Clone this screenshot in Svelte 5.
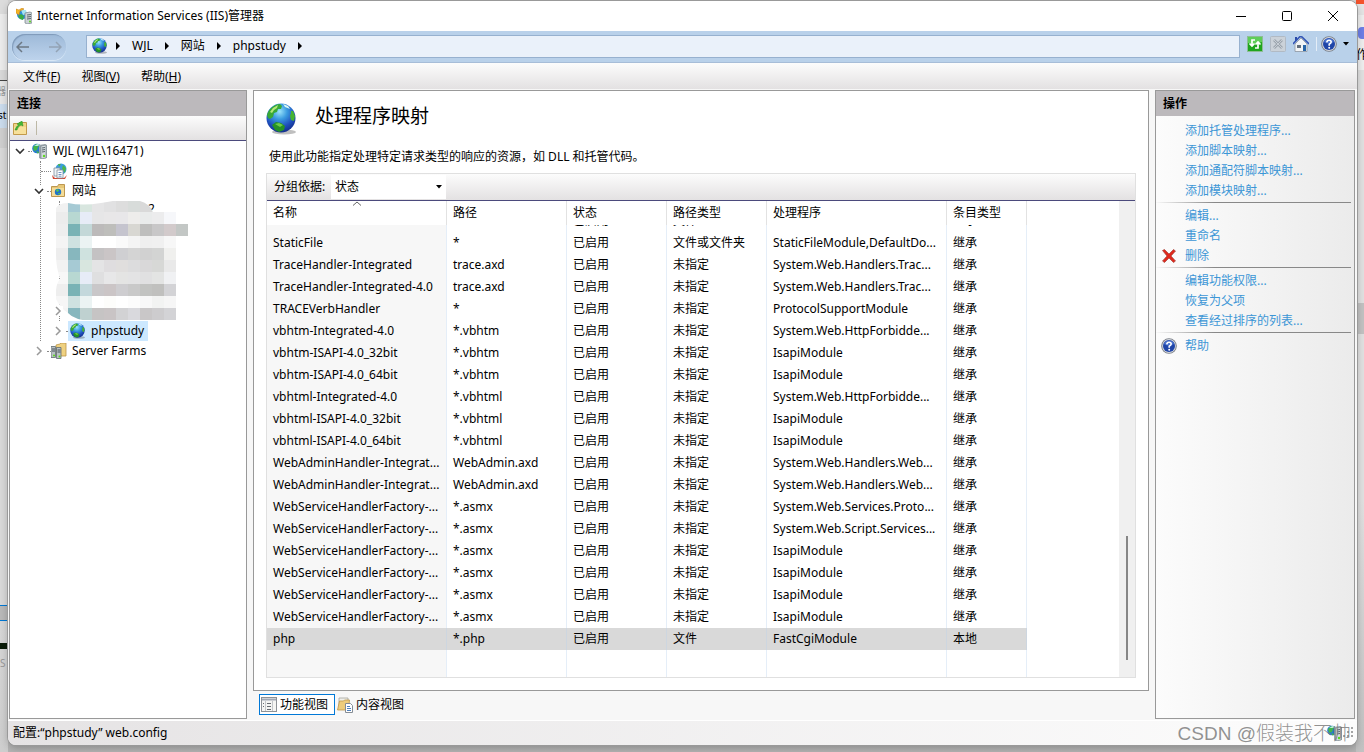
<script>
	import { onMount } from 'svelte';

	let groupBy = '状态';
	let selected = 19;
	let view = 'features';
	let list;

	const columns = [
		{ label: '名称', width: 180 },
		{ label: '路径', width: 120 },
		{ label: '状态', width: 100 },
		{ label: '路径类型', width: 100 },
		{ label: '处理程序', width: 180 },
		{ label: '条目类型', width: 80 }
	];

	const on = '已启用';
	const any = '未指定';
	const up = '继承';

	const rows = [
		['SSINC-stm', '*.stm', on, '文件', 'ServerSideIncludeModule', up],
		['StaticFile', '*', on, '文件或文件夹', 'StaticFileModule,DefaultDo...', up],
		['TraceHandler-Integrated', 'trace.axd', on, any, 'System.Web.Handlers.Trac...', up],
		['TraceHandler-Integrated-4.0', 'trace.axd', on, any, 'System.Web.Handlers.Trac...', up],
		['TRACEVerbHandler', '*', on, any, 'ProtocolSupportModule', up],
		['vbhtm-Integrated-4.0', '*.vbhtm', on, any, 'System.Web.HttpForbidde...', up],
		['vbhtm-ISAPI-4.0_32bit', '*.vbhtm', on, any, 'IsapiModule', up],
		['vbhtm-ISAPI-4.0_64bit', '*.vbhtm', on, any, 'IsapiModule', up],
		['vbhtml-Integrated-4.0', '*.vbhtml', on, any, 'System.Web.HttpForbidde...', up],
		['vbhtml-ISAPI-4.0_32bit', '*.vbhtml', on, any, 'IsapiModule', up],
		['vbhtml-ISAPI-4.0_64bit', '*.vbhtml', on, any, 'IsapiModule', up],
		['WebAdminHandler-Integrat...', 'WebAdmin.axd', on, any, 'System.Web.Handlers.Web...', up],
		['WebAdminHandler-Integrat...', 'WebAdmin.axd', on, any, 'System.Web.Handlers.Web...', up],
		['WebServiceHandlerFactory-...', '*.asmx', on, any, 'System.Web.Services.Proto...', up],
		['WebServiceHandlerFactory-...', '*.asmx', on, any, 'System.Web.Script.Services...', up],
		['WebServiceHandlerFactory-...', '*.asmx', on, any, 'IsapiModule', up],
		['WebServiceHandlerFactory-...', '*.asmx', on, any, 'IsapiModule', up],
		['WebServiceHandlerFactory-...', '*.asmx', on, any, 'IsapiModule', up],
		['WebServiceHandlerFactory-...', '*.asmx', on, any, 'IsapiModule', up],
		['php', '*.php', on, '文件', 'FastCgiModule', '本地']
	];

	const actions = [
		['添加托管处理程序...', '添加脚本映射...', '添加通配符脚本映射...', '添加模块映射...'],
		['编辑...', '重命名', '删除'],
		['编辑功能权限...', '恢复为父项', '查看经过排序的列表...'],
		['帮助']
	];

	// blurred-out site names, one row of 12px tiles per entry
	const mosaic = [
		['#f1f1f1', '#a6cad4', '#d8e6df', '#e5e5e6', '#e1e1e2', '#dddddd', '#d8dcda', '#d9d9d9', '#e1e1e1'],
		['#ececec', '#b8d8d2', '#e7ecf7', '#e6e6e7', '#e8e7e8', '#e8e7e9', '#eeedeb', '#e9ebeb', '#ececed', '#f6f7fa'],
		['#eeeeee', '#79b3b5', '#c3d8d8', '#bcbaba', '#bebebb', '#c5c4ce', '#d8d7d2', '#bebebd', '#c8c7c8', '#d2cacb', '#c3c7c5'],
		['#f4f4f4', '#cfe2e1', '#ebf3f3', '#ffffff', '#ffffff', '#fafafa', '#f4f4f4', '#efefef', '#f0f0f0', '#f7f7f7'],
		['#ededed', '#87b7be', '#cfe2df', '#c4c2c3', '#cac5c6', '#cfcfd2', '#d4d4d4', '#d1d1d1', '#d3d4d3', '#f0f0ee'],
		['#f2f2f2', '#a6cad4', '#d8e6df', '#e4e4e5', '#dfdddf', '#e0dedd', '#dcdcdd', '#d9d8d9', '#d7d8d6', '#e9e9e9'],
		['#f7f7f7', '#b8d8d2', '#e7ecf7', '#dfdfe0', '#e7e7e8', '#e4e4e3', '#e3e3e4', '#e0e0e1', '#e3e4e3', '#f0f1f3'],
		['#eeeeee', '#79b3b5', '#c3d8dc', '#c9c7c9', '#cbc5c6', '#cecdd0', '#c9c9c9', '#c2c3c1', '#c0c0be', '#d3d3d6'],
		['#f6f6f6', '#cfe2e1', '#ebf3f3', '#ffffff', '#fdfdfb', '#ffffff', '#fcfcfc', '#f8f8f8', '#f2f3f2', '#f6f6f6'],
		['#f4f4f4', '#87b7be', '#bfd1d0', '#c6c4c4', '#c9c4c5', '#d2d2d4', '#d9d9dd', '#c9c7c8', '#cdccce', '#d3d3d6']
	];

	function scrollToEnd() {
		list.scrollTop = list.scrollHeight;
	}

	onMount(() => {
		scrollToEnd();
		window.addEventListener('resize', scrollToEnd);
		return () => window.removeEventListener('resize', scrollToEnd);
	});
</script>

{#snippet globe(size)}
	<svg width={size} height={size} viewBox="0 0 32 32" aria-hidden="true">
		<defs>
			<radialGradient id="sea" cx="0.45" cy="0.28" r="0.75">
				<stop offset="0" stop-color="#9be4fa" />
				<stop offset="0.35" stop-color="#3a9be0" />
				<stop offset="0.7" stop-color="#1f4fbd" />
				<stop offset="1" stop-color="#122a86" />
			</radialGradient>
		</defs>
		<ellipse cx="18" cy="29" rx="12" ry="2.5" fill="#000" opacity="0.25" />
		<circle cx="15" cy="15" r="14.5" fill="url(#sea)" />
		<path d="M1 12C3 5 9 1 14 1l2 2-1 3-3 0-1 3-3 1-1 4-3 2-2-1z" fill="#39a935" />
		<path d="M4 9l3-4 5-3-1 3-3 2-2 3z" fill="#b6e878" />
		<path d="M6 22l4-3 5 1 4 3-1 4-5 2-4-2z" fill="#259127" />
		<path d="M9 21l4-1 4 2-3 2z" fill="#6ccb48" />
		<path d="M25 8l2 0 2 5-1 5-3-1-1-4 1-3z" fill="#46b332" />
		<path d="M17 1l5 2 2 3-5-2z" fill="#d9f7f4" />
	</svg>
{/snippet}

{#snippet server()}
	<svg width="16" height="16" viewBox="0 0 16 16" aria-hidden="true">
		<circle cx="5" cy="5.5" r="4.8" fill="#2679d2" />
		<path d="M1 4l3-3 4 1-2 2-1 3-3 1zM4 8l3 1-1 2z" fill="#43b649" />
		<path d="M2 2.5l4-1.5 2 1-3 1z" fill="#c8f1f4" />
		<path d="M7 2l6-1 2 1v13l-6 1-2-1z" fill="#9aa5ab" />
		<path d="M9 3l5-1v13l-5 1z" fill="#d5dcdf" stroke="#77828a" stroke-width="0.6" />
		<path d="M10 5l3-.5M10 7l3-.5M10 9l3-.5" stroke="#59656d" />
		<circle cx="12" cy="13" r="1.2" fill="#5dda1e" />
	</svg>
{/snippet}

{#snippet help()}
	<svg width="16" height="16" viewBox="0 0 16 16" aria-hidden="true">
		<circle cx="8" cy="8" r="7.8" fill="#777c85" />
		<circle cx="8" cy="8" r="6.9" fill="#d5d8de" />
		<circle cx="8" cy="8" r="6" fill="#1f45a8" />
		<path d="M3 6a5.3 5.3 0 0 1 10 0q-5 3-10 0z" fill="#4a72ce" />
		<path d="M5.8 6.3Q6 4.2 8.100 4.200t2.100 1.900Q10.200 7.300 8.200 8.300v1.400" fill="none" stroke="#fff" stroke-width="1.600" />
		<circle cx="8.2" cy="11.7" r="1" fill="#fff" />
	</svg>
{/snippet}

{#snippet chevron(open)}
	<svg class="chevron" width="10" height="10" viewBox="0 0 10 10" aria-hidden="true">
		{#if open}
			<path d="M1 3l4 4 4-4" fill="none" stroke="#333" stroke-width="1.6" />
		{:else}
			<path d="M3 1l4 4-4 4" fill="none" stroke="#999" stroke-width="1.5" />
		{/if}
	</svg>
{/snippet}

{#snippet crumbArrow()}
	<svg width="4" height="8" viewBox="0 0 4 8" aria-hidden="true"><path d="M0 0l4 4-4 4z" fill="#000" /></svg>
{/snippet}

<div class="desktop">
	<div class="behind-left" aria-hidden="true">
		<span class="scrap gray">器</span>
		<span class="scrap stu">stu</span>
		<span class="scrap tab"></span>
		<span class="scrap bar"></span>
		<span class="scrap ess">S</span>
	</div>
	<div class="behind-right" aria-hidden="true">
		<span class="scrap blob"></span>
		<span class="scrap zuo">作</span>
		<span class="scrap thumb"></span>
	</div>

	<div class="window">
		<header class="titlebar">
			<svg width="16" height="16" viewBox="0 0 16 16" aria-hidden="true">
				<circle cx="6" cy="6.5" r="5" fill="#2b8ddd" />
				<path d="M2 8l3-2 3 2-1 4-3-1z" fill="#3aac42" />
				<path d="M5 2l5 0 1 4-4 1z" fill="#a5e4f2" />
				<path d="M0 5V1l3 1 3-2 2 1-4 2-1 4z" fill="#f5b526" stroke="#c87a0a" stroke-width="0.5" />
				<path d="M9 5l5-1 2 1v10l-5 1-2-1z" fill="#cbd2d5" stroke="#748088" stroke-width="0.7" />
				<path d="M11 7l4-.5M11 9l4-.5M11 11l4-.5" stroke="#5b666d" />
				<circle cx="14" cy="13.5" r="1" fill="#55d31e" />
			</svg>
			<h1>Internet Information Services (IIS)管理器</h1>
			<div class="window-buttons">
				<button aria-label="最小化"><svg width="10" height="10"><path d="M0 5.5h10" stroke="#000" /></svg></button>
				<button aria-label="最大化">
					<svg width="10" height="10"><rect x="0.5" y="0.5" width="9" height="9" rx="1" fill="none" stroke="#000" /></svg>
				</button>
				<button aria-label="关闭"><svg width="10" height="10"><path d="M0 0l10 10M10 0L0 10" stroke="#000" /></svg></button>
			</div>
		</header>

		<div class="navbar">
			<div class="history">
				<button aria-label="后退">
					<svg width="14" height="12" viewBox="0 0 14 12"><path d="M13 6H1M6 1L1 6l5 5" fill="none" stroke="#6c7884" stroke-width="1.5" /></svg>
				</button>
				<button aria-label="前进">
					<svg width="14" height="12" viewBox="0 0 14 12"><path d="M1 6h12M8 1l5 5-5 5" fill="none" stroke="#93a3b5" stroke-width="1.5" /></svg>
				</button>
			</div>
			<nav class="address" aria-label="路径">
				{@render globe(16)}
				{@render crumbArrow()}
				<button>WJL</button>
				{@render crumbArrow()}
				<button>网站</button>
				{@render crumbArrow()}
				<button>phpstudy</button>
				{@render crumbArrow()}
			</nav>
			<div class="tools">
				<button aria-label="刷新">
					<svg width="16" height="16" viewBox="0 0 16 16">
						<rect x="0.5" y="0.5" width="15" height="15" fill="#1fa51e" stroke="#8ebd95" />
						<path d="M1 1h14v5q-7 3-14 1z" fill="#5fce58" />
						<path d="M8 4H5v5M2.500 7.500L5 10l2.500-2.500M8 12h3V7M8.500 8.500L11 6l2.500 2.500" fill="none" stroke="#fff" stroke-width="1.7" />
					</svg>
				</button>
				<button aria-label="停止" disabled>
					<svg width="16" height="16" viewBox="0 0 16 16">
						<rect x="0.5" y="0.5" width="15" height="15" rx="1" fill="#cbd2d9" stroke="#b1bac4" />
						<path d="M4 4l8 8M12 4l-8 8" stroke="#9ca5ae" stroke-width="2.6" />
						<path d="M4 4l8 8M12 4l-8 8" stroke="#c7ced5" />
					</svg>
				</button>
				<button aria-label="主页">
					<svg width="16" height="16" viewBox="0 0 16 16">
						<path d="M2 1h2v4H2z" fill="#2a4aa8" />
						<path d="M2 8l6-6 6 6v7.500H2z" fill="#f2f4f6" stroke="#8b95a1" stroke-width="0.8" />
						<path d="M0 8l7-7.500L9 1l7 7" fill="none" stroke="#3455b4" stroke-width="1.6" />
						<rect x="4" y="9" width="4" height="3" fill="#636e7b" />
						<rect x="10" y="9" width="3" height="6" fill="#2765a8" />
					</svg>
				</button>
				<span class="divider"></span>
				<button class="help-button" aria-label="帮助">
					{@render help()}
					<svg width="6" height="4" viewBox="0 0 6 4"><path d="M0 0h6L3 3.500z" /></svg>
				</button>
			</div>
		</div>

		<nav class="menubar" aria-label="菜单">
			<button>文件(<u>F</u>)</button>
			<button>视图(<u>V</u>)</button>
			<button>帮助(<u>H</u>)</button>
		</nav>

		<main>
			<section class="pane connections">
				<h2>连接</h2>
				<div class="pane-tools">
					<button aria-label="连接到">
						<svg width="14" height="14" viewBox="0 0 14 14">
							<path d="M0.5 2.500h5l1-1h7v12H0.500z" fill="#efd487" stroke="#c29a4b" />
							<path d="M1 6h12v7H1z" fill="#f7e09b" />
							<path d="M2 9q1-4 4-5L4 3l5-3 1 5-2-1q-3 1-4 5z" fill="#45b936" stroke="#258c20" stroke-width="0.5" />
						</svg>
					</button>
					<span class="grip"></span>
				</div>
				<ul class="tree">
					<li class="depth-0">
						{@render chevron(true)}<i class="dots"></i>
						{@render server()}
						<button>WJL (WJL\16471)</button>
					</li>
					<li class="depth-1 leaf">
						<i class="dots"></i>
						<svg width="16" height="16" viewBox="0 0 16 16" aria-hidden="true">
							<circle cx="10" cy="6" r="5.5" fill="#3b9de0" />
							<path d="M12 2l3 3-1 5-3-4zM7 1l3 0-2 3z" fill="#4db64a" />
							<path d="M1 12l3 3h9l3-3-2 4H2z" fill="#cf4634" />
							<path d="M3 5h6v8H3z" fill="#eef3f7" stroke="#7d8d9c" stroke-width="0.8" />
							<path d="M6 7h6v8H6z" fill="#fff" stroke="#7d8d9c" stroke-width="0.8" />
							<path d="M7.500 9.500h3M7.500 11.500h3M7.500 13.200h3" stroke="#4e79b5" stroke-width="0.8" />
						</svg>
						<button>应用程序池</button>
					</li>
					<li class="depth-1">
						{@render chevron(true)}<i class="dots"></i>
						<svg width="16" height="16" viewBox="0 0 16 16" aria-hidden="true">
							<path d="M0.5 3.500h6l1-2h6v12h-13z" fill="#e7c777" stroke="#bd9750" />
							<path d="M1 5h12v8H1z" fill="#f4dc97" />
							<circle cx="7" cy="9" r="3.200" fill="#1f72c8" />
							<path d="M5 7l2-1 1 2-2 1zM7 10l2 0-1 2z" fill="#56c949" />
						</svg>
						<button>网站</button>
					</li>
					<li class="masked">
						<svg width="132" height="120" viewBox="0 1 132 120" aria-hidden="true">
							<defs>
								<clipPath id="smear">
									<path d="M0 8Q3 3 12 3 26 6 45 3 70-2 84 1q10 3 13 11h35v109H36q-18-1-24-8-8-5-12-14-1-15 4-20-4-12-4-24z" />
								</clipPath>
							</defs>
							<text x="92" y="13" class="leftover">2</text>
							<g clip-path="url(#smear)">
								{#each mosaic as line, y}
									{#each line as fill, x}
										<rect x={x * 12} y={y * 12} width="12" height="12" {fill} />
									{/each}
								{/each}
							</g>
						</svg>
						<span class="masked-chevron">{@render chevron(false)}</span>
					</li>
					<li class="depth-2">
						{@render chevron(false)}<i class="dots"></i>
						<button class="active">{@render globe(16)}phpstudy</button>
					</li>
					<li class="depth-1">
						{@render chevron(false)}<i class="dots"></i>
						<svg width="16" height="16" viewBox="0 0 16 16" aria-hidden="true">
							<path d="M5 2l4-1 1-1h5v13H6z" fill="#efd180" stroke="#bd9547" stroke-width="0.8" />
							<path d="M0 3.500h4.500v11H0zM5.500 4.500H10v11H5.500z" fill="#b9c1c4" stroke="#606b70" stroke-width="0.8" />
							<path d="M1 6h3M1 8h3M6.500 7h3M6.500 9h3" stroke="#465158" />
							<circle cx="3" cy="12.500" r="1" fill="#58d818" /><circle cx="8.500" cy="13.500" r="1" fill="#58d818" />
						</svg>
						<button>Server Farms</button>
					</li>
				</ul>
			</section>

			<section class="workspace">
				<div class="page">
					<div class="page-title">
						{@render globe(32)}
						<h2>处理程序映射</h2>
					</div>
					<p>使用此功能指定处理特定请求类型的响应的资源，如 DLL 和托管代码。</p>
					<div class="grid-box">
						<div class="group-bar">
							<label for="group-by">分组依据:</label>
							<div class="picker">
								<select id="group-by" bind:value={groupBy}>
									<option>不进行分组</option>
									<option>状态</option>
									<option>路径类型</option>
								</select>
								<svg width="6" height="4" viewBox="0 0 6 4" aria-hidden="true"><path d="M0 0h6L3 3.500z" /></svg>
							</div>
						</div>
						<div class="grid-body">
							<div class="grid-scroll" bind:this={list}>
								<table>
									<colgroup>
										{#each columns as col}
											<col style="width: {col.width}px" />
										{/each}
									</colgroup>
									<thead>
										<tr>
											{#each columns as col, i}
												<th scope="col">
													{#if i === 0}
														<svg class="sort" width="8" height="5" viewBox="0 0 8 5" aria-hidden="true"><path d="M0 4.500L4 1l4 3.500" fill="none" stroke="#666" /></svg>
													{/if}
													{col.label}
												</th>
											{/each}
										</tr>
									</thead>
									<tbody>
										{#each rows as row, i}
											<tr class:selected={selected === i} on:click={() => (selected = i)}>
												{#each row as cell}
													<td>{cell}</td>
												{/each}
											</tr>
										{/each}
										<tr class="filler">
											{#each columns as _}
												<td></td>
											{/each}
										</tr>
									</tbody>
								</table>
							</div>
							<div class="track"><span></span></div>
						</div>
					</div>
				</div>
				<div class="view-tabs">
					<button class:current={view === 'features'} on:click={() => (view = 'features')}>
						<svg width="16" height="16" viewBox="0 0 16 16" aria-hidden="true">
							<rect x="0.5" y="0.5" width="15" height="14" fill="#f5f5f3" stroke="#8d9196" />
							<path d="M1 2.500h14" stroke="#a2a8b4" stroke-width="2" />
							<path d="M4.500 4v10M11.500 4v10" stroke="#c4c7ca" />
							<path d="M6 6.500h4M6 9.500h4M6 12.500h4M2 6.500h1M2 9.500h1" stroke="#686c71" />
						</svg>
						功能视图
					</button>
					<button class:current={view === 'content'} on:click={() => (view = 'content')}>
						<svg width="16" height="16" viewBox="0 0 16 16" aria-hidden="true">
							<path d="M2 1h9v11H2z" fill="#f0f0ec" stroke="#a3a39c" stroke-width="0.8" />
							<path d="M0.500 13l2-9h4l1-1h5l-1 10z" fill="#edcc7c" stroke="#be974d" stroke-width="0.8" />
							<path d="M8.500 6.500h5l2 2v7h-7z" fill="#fff" stroke="#858c94" />
							<path d="M10 9.500h3M10 11.500h4M10 13.500h4" stroke="#4d80bd" />
						</svg>
						内容视图
					</button>
				</div>
			</section>

			<aside class="pane actions">
				<h2>操作</h2>
				{#each actions as group}
					<ul>
						{#each group as action}
							<li>
								<span class="action-icon">
									{#if action === '删除'}
										<svg width="14" height="14" viewBox="0 0 14 14" aria-hidden="true">
											<path d="M0.500 1.500L5 7 0.500 12l2 1.500L7 9l4.500 4.500 2-1.500L9 7l4.500-5-2-1.500L7 5 2.500 0.500z" fill="#e0281d" stroke="#a4453c" stroke-width="0.7" />
										</svg>
									{:else if action === '帮助'}
										{@render help()}
									{/if}
								</span>
								<a href="#{action}">{action}</a>
							</li>
						{/each}
					</ul>
				{/each}
			</aside>
		</main>

		<footer>
			<span>配置:“phpstudy” web.config</span>
			<span class="status-icon">{@render server()}</span>
			<svg width="12" height="12" viewBox="0 0 12 12" aria-hidden="true">
				<path d="M8 0h2v2H8zM4 4h2v2H4zM8 4h2v2H8zM0 8h2v2H0zM4 8h2v2H4zM8 8h2v2H8z" fill="#a5a5a5" />
			</svg>
		</footer>
	</div>
	<div class="watermark">CSDN @假装我不帅</div>
</div>

<style>
	:global(body) {
		margin: 0;
	}
	.desktop {
		position: relative;
		box-sizing: border-box;
		height: 100vh;
		min-height: 480px;
		padding: 1px 7px 7px 8px;
		overflow: hidden;
		background: linear-gradient(#d4d4d4, #c8c8c8 60%, #b5b5b5);
		font-family: 'Noto Sans', 'Noto Sans CJK SC', sans-serif;
		font-size: 12px;
		line-height: 20px;
		color: #000;
	}
	button,
	select {
		padding: 0;
		border: 0;
		background: none;
		font: inherit;
		color: inherit;
		white-space: nowrap;
	}
	h1,
	h2,
	p,
	ul {
		margin: 0;
		padding: 0;
		font-size: 12px;
		font-weight: 400;
		list-style: none;
	}
	svg {
		flex: none;
		display: block;
	}

	/* slivers of the windows behind */
	.behind-left,
	.behind-right {
		position: absolute;
		top: 0;
		bottom: 0;
		overflow: hidden;
	}
	.behind-left {
		left: 0;
		width: 8px;
		background: linear-gradient(#dcdcdc 0 14px, #ececec 14px 70px, #d9d9d9 70px 80px, #444 80px 81px, #e6e6e6 81px 104px, #cbdced 104px 128px, #cfcfcf 128px 148px, #d9d9d9 148px 600px, #cecece);
	}
	.behind-right {
		right: 0;
		width: 8px;
		background: linear-gradient(#f4532c 0 4px, #e5e5e5 4px 15px, #f0f0f0 15px 70px, #e2e2e2 70px 500px, #c2c2c2);
	}
	.scrap {
		position: absolute;
		left: 0;
		font-size: 10px;
		line-height: 14px;
	}
	.gray {
		top: 84px;
		left: -4px;
		color: #999;
	}
	.stu {
		top: 108px;
		left: -2px;
	}
	.tab {
		top: 605px;
		width: 8px;
		height: 14px;
		border: solid #0078d4;
		border-width: 1px 0;
		background: #b9b9b9;
	}
	.bar {
		top: 643px;
		width: 8px;
		height: 6px;
		background: #0a1c08;
	}
	.ess {
		top: 656px;
		color: #999;
	}
	.blob {
		top: 27px;
		left: 2px;
		width: 12px;
		height: 12px;
		border-radius: 4px;
		background: #6d7fe8;
	}
	.zuo {
		top: 48px;
		font-size: 12px;
	}
	.thumb {
		top: 303px;
		width: 8px;
		height: 31px;
		background: #c3c3c3;
	}

	.window {
		position: relative;
		display: flex;
		flex-direction: column;
		height: 100%;
		border-radius: 8px;
		overflow: hidden;
		background: #f7f7f7;
		box-shadow:
			0 0 0 1px #999,
			0 3px 8px rgba(0, 0, 0, 0.25);
	}
	.titlebar {
		display: flex;
		align-items: center;
		gap: 5px;
		height: 30px;
		padding: 0 1px 0 8px;
		background: #fff;
	}
	.window-buttons {
		display: flex;
		align-self: stretch;
		margin-left: auto;
	}
	.window-buttons button {
		display: flex;
		align-items: center;
		justify-content: center;
		width: 46px;
	}
	.navbar {
		display: flex;
		align-items: center;
		box-sizing: border-box;
		height: 32px;
		padding: 0 8px 0 4px;
		border-bottom: 1px solid #a7bdd8;
		background: #b9d1ea;
	}
	.history {
		display: flex;
		align-items: center;
		justify-content: space-between;
		box-sizing: border-box;
		width: 54px;
		height: 26px;
		margin-right: 20px;
		padding: 0 4px;
		border-radius: 13px;
		background: linear-gradient(#9db9d8, #bdd3ec);
		box-shadow:
			inset 1px 1px 1px #7f9ab9,
			0 1px 1px #dce9f7;
	}
	.address {
		display: flex;
		flex: 1;
		align-items: center;
		gap: 12px;
		height: 19px;
		padding: 0 0 2px 5px;
		border: 1px solid #97b1cf;
		background: #eaf1fa;
	}
	.address > svg:first-child {
		margin-right: -4px;
	}
	.tools {
		display: flex;
		align-items: center;
		gap: 7px;
		padding: 0 0 5px 7px;
	}
	.divider {
		width: 1px;
		height: 14px;
		margin-right: -3px;
		background: #e4edf7;
	}
	.help-button {
		display: flex;
		align-items: center;
		gap: 6px;
	}
	.menubar {
		display: flex;
		align-items: center;
		gap: 21px;
		height: 24px;
		padding: 2px 0 0 15px;
		background: linear-gradient(#fcfcfc, #e3e1e2);
	}

	main {
		display: flex;
		flex: 1;
		gap: 6px;
		min-height: 0;
		padding: 1px 2px 1px 1px;
		background: #f7f7f7;
	}
	.pane {
		box-sizing: border-box;
		border: 1px solid #999;
		background: #fff;
	}
	.pane h2 {
		padding-left: 7px;
		background: #bcb9bc;
		font-weight: 700;
		line-height: 25px;
	}
	.connections {
		flex: none;
		width: 238px;
	}
	.pane-tools {
		display: flex;
		align-items: center;
		gap: 9px;
		height: 24px;
		padding-left: 3px;
		border-bottom: 1px solid #4b4a7c;
		background: linear-gradient(#fcfcfc, #e3e1e2);
	}
	.grip {
		width: 1px;
		height: 14px;
		background: #bdb8a6;
	}
	.tree {
		position: relative;
	}
	.tree::before,
	.tree::after {
		position: absolute;
		z-index: 0;
		border-left: 1px dotted #888;
		content: '';
	}
	.tree::before {
		top: 20px;
		left: 30px;
		height: 180px;
	}
	.tree::after {
		top: 60px;
		left: 49px;
		height: 120px;
	}
	.tree li {
		position: relative;
		z-index: 1;
		display: flex;
		align-items: center;
		height: 20px;
	}
	.tree li > svg + button {
		margin-left: 4px;
	}
	.chevron {
		margin: 0 3px 0 0;
		background: #fff;
	}
	.dots {
		width: 4px;
		border-top: 1px dotted #888;
	}
	.tree li > .dots + svg + button {
		margin-left: 5px;
	}
	.depth-0 {
		padding-left: 5px;
	}
	.depth-1 {
		padding-left: 24px;
	}
	.leaf {
		padding-left: 31px;
	}
	.leaf .dots {
		width: 10px;
	}
	.depth-2 {
		padding-left: 43px;
	}
	.depth-2 .dots {
		margin-right: -2px;
	}
	.tree .masked {
		align-items: flex-start;
		height: 120px;
		padding-left: 46px;
	}
	.masked-chevron {
		position: absolute;
		bottom: 5px;
		left: 43px;
	}
	.leftover {
		font-size: 12px;
	}
	.active {
		display: flex;
		align-items: center;
		gap: 5px;
		height: 20px;
		padding: 0 4px 0 2px;
		background: #cce8ff;
	}

	.workspace {
		display: flex;
		flex: 1;
		flex-direction: column;
		min-width: 0;
	}
	.page {
		display: flex;
		flex: 1;
		flex-direction: column;
		min-height: 0;
		padding: 12px;
		border: 1px solid #999;
		background: #fff;
	}
	.page-title {
		display: flex;
		align-items: flex-start;
		gap: 17px;
		height: 44px;
	}
	.page-title h2 {
		font-size: 19px;
		line-height: 26px;
	}
	.page p {
		padding: 0 0 6px 3px;
	}
	.grid-box {
		display: flex;
		flex: 1;
		flex-direction: column;
		min-height: 0;
		border: 1px solid #e0e0e0;
	}
	.group-bar {
		display: flex;
		align-items: center;
		height: 26px;
		padding-left: 7px;
		border-bottom: 1px solid #4b4a7c;
		background: linear-gradient(#fcfcfc, #e3e1e2);
	}
	.group-bar label {
		width: 57px;
	}
	.picker {
		display: flex;
		align-items: center;
		width: 115px;
		height: 24px;
		background: #fff;
	}
	.picker select {
		flex: 1;
		margin-right: -6px;
		padding-left: 4px;
		appearance: none;
		outline: none;
	}
	.picker svg {
		margin-right: 4px;
		pointer-events: none;
	}
	.grid-body {
		display: flex;
		flex: 1;
		min-height: 0;
	}
	.grid-scroll {
		flex: 1;
		overflow: hidden;
	}
	.track {
		display: flex;
		flex-direction: column;
		justify-content: flex-end;
		width: 9px;
		padding-left: 7px;
		background: #f0f0f0;
	}
	.track span {
		width: 2px;
		height: 26%;
		margin-bottom: 17px;
		background: #868686;
	}
	table {
		width: 760px;
		border-spacing: 0;
		table-layout: fixed;
	}
	th {
		position: sticky;
		top: 0;
		height: 24px;
		padding: 0 0 0 6px;
		border-right: 1px solid #e2e2e2;
		background: #fff;
		font-weight: 400;
		line-height: 22px;
		text-align: left;
	}
	.sort {
		position: absolute;
		top: 0;
		left: 86px;
	}
	td {
		height: 22px;
		padding: 0 2px 0 6px;
		border-right: 1px solid #e5eef8;
		overflow: hidden;
		line-height: 22px;
		text-overflow: ellipsis;
		white-space: nowrap;
	}
	td:first-child {
		background: #f7f7f7;
	}
	.selected td {
		background: #d9d9d9;
		border-right-color: #cdd6e0;
	}
	.filler td {
		height: 27px;
	}
	.view-tabs {
		display: flex;
		padding: 3px 0 4px 6px;
	}
	.view-tabs button {
		display: flex;
		align-items: center;
		gap: 3px;
		height: 21px;
		padding: 0 6px 0 1px;
		border: 1px solid transparent;
	}
	.view-tabs .current {
		border-color: #0078d7;
		background: #fff;
	}

	.actions {
		flex: none;
		width: 200px;
		background: linear-gradient(90deg, #fcfcfc, #ebebeb);
	}
	.actions h2 {
		margin-bottom: 5px;
	}
	.actions ul {
		padding-bottom: 1px;
	}
	.actions ul + ul {
		margin-right: 3px;
		padding-top: 3px;
		border-top: 1px solid;
		border-image: linear-gradient(90deg, #f8f8f8, #888 30%, #888) 1 0 0 0;
	}
	.actions li {
		display: flex;
		align-items: center;
		height: 20px;
	}
	.action-icon {
		display: flex;
		justify-content: center;
		width: 16px;
		margin: 0 8px 0 5px;
	}
	.actions a {
		color: #3c96d6;
		text-decoration: none;
	}

	footer {
		display: flex;
		align-items: center;
		height: 24px;
		padding: 0 2px 0 5px;
		border-top: 1px solid #fff;
		background: linear-gradient(90deg, #e5e3e4, #fdfdfd);
	}
	.status-icon {
		margin-left: auto;
	}
	.watermark {
		position: absolute;
		right: 13px;
		bottom: 5px;
		color: rgba(110, 110, 110, 0.75);
		font-family: 'Liberation Sans', 'Noto Sans CJK SC', sans-serif;
		font-size: 19px;
		font-weight: 300;
		line-height: 26px;
	}
</style>
